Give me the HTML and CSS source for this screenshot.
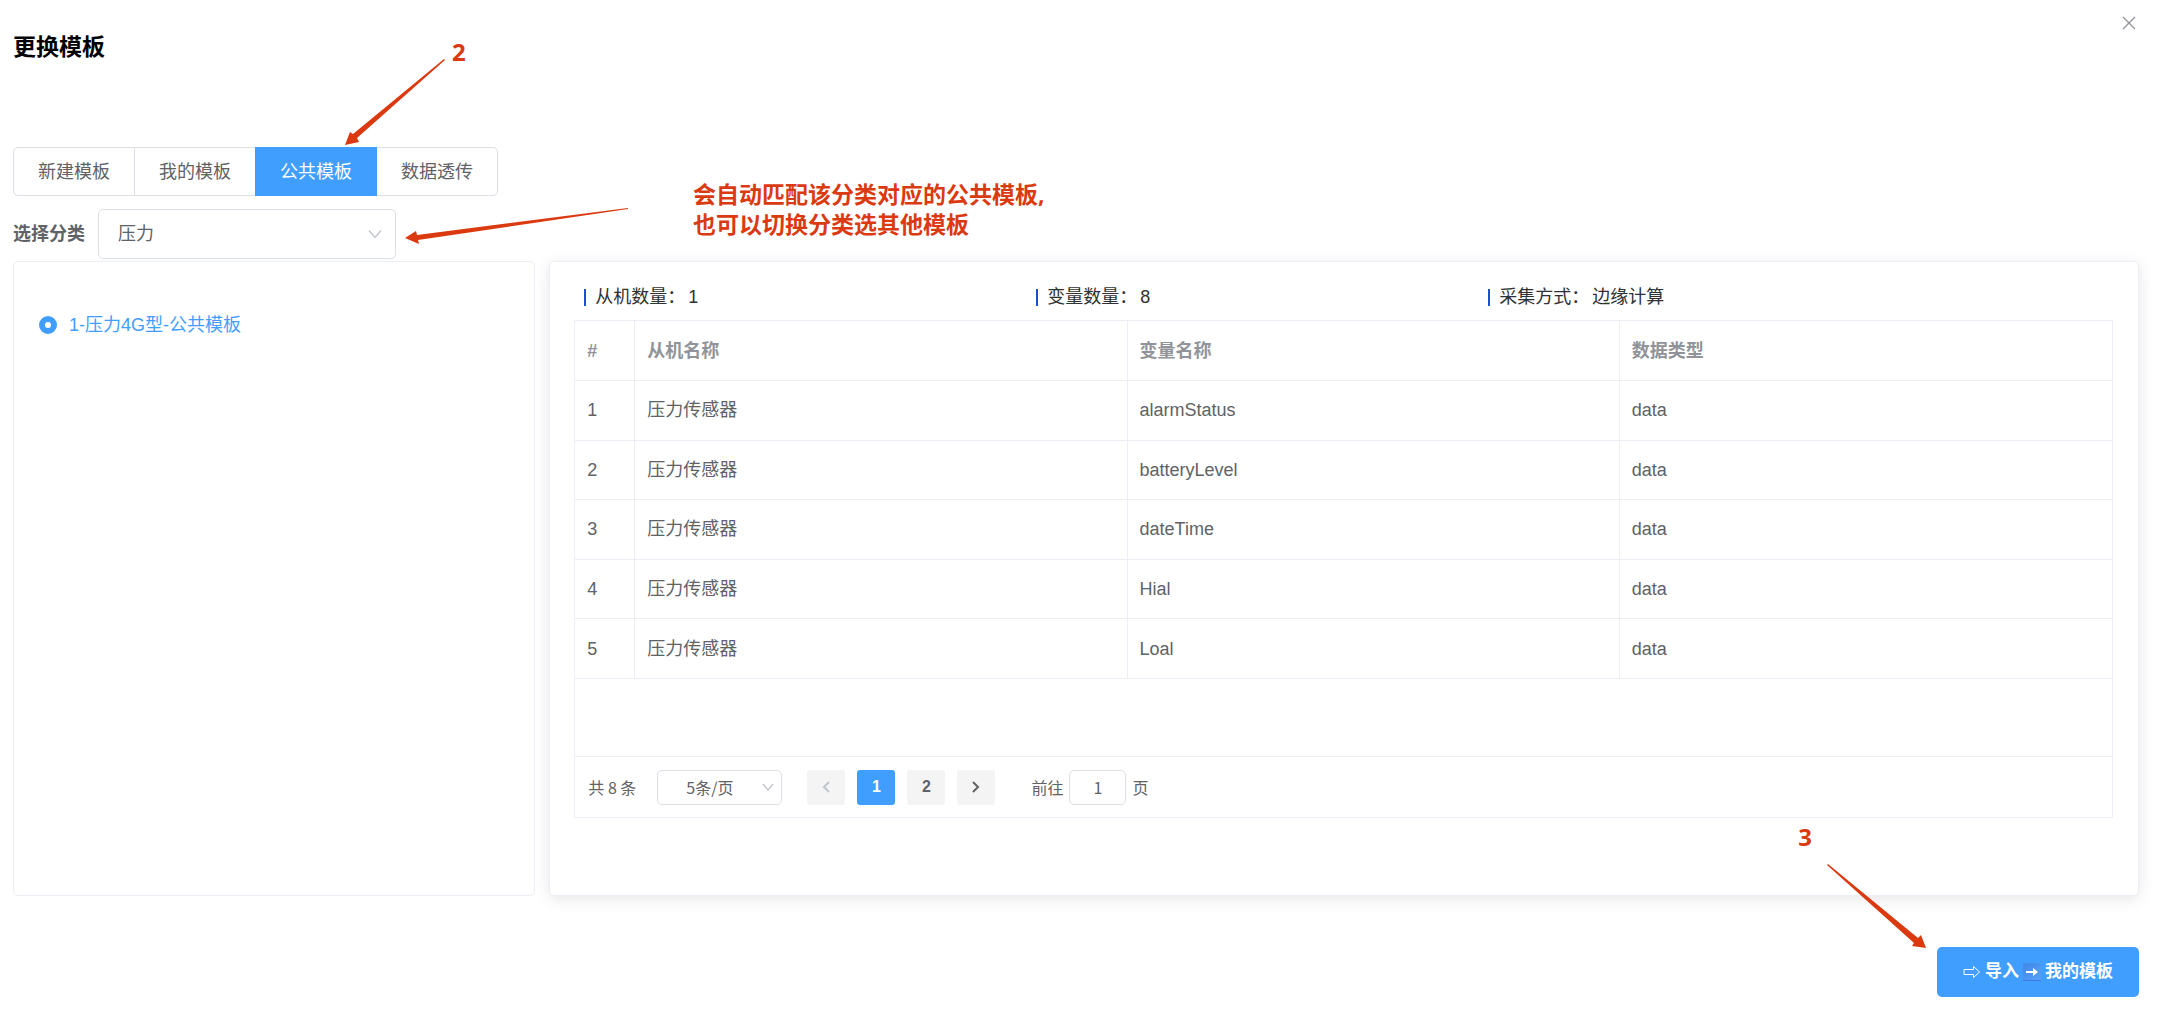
FILE: index.html
```html
<!DOCTYPE html>
<html lang="zh-CN">
<head>
  <meta charset="UTF-8">
  <meta name="viewport" content="width=device-width, initial-scale=1.0">
  <title>更换模板</title>
  <link rel="stylesheet" href="styles.css">
</head>
<body>
  <div class="dialog">
    <header class="dialog-header">
      <h1>更换模板</h1>
      <button type="button" class="close-btn" aria-label="关闭">
        <svg width="14" height="14" viewBox="0 0 14 14"><path d="M1 1l12 12M13 1L1 13" /></svg>
      </button>
    </header>

    <section class="toolbar">
      <div class="tabs">
        <button type="button" class="tab">新建模板</button>
        <button type="button" class="tab">我的模板</button>
        <button type="button" class="tab active">公共模板</button>
        <button type="button" class="tab">数据透传</button>
      </div>
      <div class="category">
        <label for="category">选择分类</label>
        <div class="select-box">
          <select id="category">
            <option>压力</option>
          </select>
          <svg class="chevron" width="14" height="9" viewBox="0 0 14 9"><path d="M1 1l6 7 6-7" /></svg>
        </div>
      </div>

      <!-- Guide notes for step 2 -->
      <span class="note step-two">2</span>
      <svg class="arrow arrow-tabs" width="100" height="87" viewBox="0 0 100 87">
        <path d="M99 0L100 1L12 79L14 83L0 86L5 73L8 75Z" />
      </svg>
      <svg class="arrow arrow-category" width="224" height="37" viewBox="0 0 224 37">
        <path d="M223 1L223 2L13 33L14 37L0 31L11 24L12 28Z" />
      </svg>
      <p class="note note-text">会自动匹配该分类对应的公共模板,<br>也可以切换分类选其他模板</p>
    </section>

    <main class="panels">
      <div class="template-list">
        <label class="template-item">
          <input type="radio" name="template" checked>
          <span>1-压力4G型-公共模板</span>
        </label>
      </div>

      <div class="template-detail">
        <ul class="stats">
          <li><span>从机数量：</span><span>1</span></li>
          <li><span>变量数量：</span><span>8</span></li>
          <li><span>采集方式：</span><span>边缘计算</span></li>
        </ul>

        <div class="table-box">
          <table>
            <thead>
              <tr><th class="index">#</th><th>从机名称</th><th>变量名称</th><th>数据类型</th></tr>
            </thead>
            <tbody>
              <tr><td>1</td><td>压力传感器</td><td>alarmStatus</td><td>data</td></tr>
              <tr><td>2</td><td>压力传感器</td><td>batteryLevel</td><td>data</td></tr>
              <tr><td>3</td><td>压力传感器</td><td>dateTime</td><td>data</td></tr>
              <tr><td>4</td><td>压力传感器</td><td>Hial</td><td>data</td></tr>
              <tr><td>5</td><td>压力传感器</td><td>Loal</td><td>data</td></tr>
            </tbody>
          </table>

          <div class="pagination">
            <span class="total">共 8 条</span>
            <div class="select-box page-size">
              <select aria-label="每页条数">
                <option>5条/页</option>
              </select>
              <svg class="chevron" width="12" height="8" viewBox="0 0 12 8"><path d="M1 1l5 6 5-6" /></svg>
            </div>
            <div class="pager">
              <button type="button" disabled aria-label="上一页">
                <svg width="8" height="12" viewBox="0 0 8 12"><path d="M7 1L2 6l5 5" /></svg>
              </button>
              <button type="button" class="active">1</button>
              <button type="button">2</button>
              <button type="button" aria-label="下一页">
                <svg width="8" height="12" viewBox="0 0 8 12"><path d="M1 1l5 5-5 5" /></svg>
              </button>
            </div>
            <label class="jump">前往 <input type="text" value="1"> 页</label>
          </div>
        </div>
      </div>
    </main>

    <footer class="dialog-footer">
      <button type="button" class="import-btn">
        <svg class="icon-outline" width="18" height="14" viewBox="0 0 18 14"><path d="M1 4.500h9.500V1.500l6 5.500-6 5.500v-3H1z" /></svg>
        <span>导入</span>
        <svg width="18" height="18" viewBox="0 0 18 18">
          <defs>
            <linearGradient id="tile" x1="0" y1="0" x2="1" y2="1">
              <stop offset="0" stop-color="#3f86e6" />
              <stop offset="1" stop-color="#5aa2fa" />
            </linearGradient>
          </defs>
          <rect width="18" height="18" rx="1" fill="url(#tile)" />
          <path d="M0 17h18v1H0z" fill="#3f7be0" />
          <path d="M3 8h7V5l5 4-5 4v-3H3z" fill="#fff" />
        </svg>
        <span>我的模板</span>
      </button>

      <!-- Guide notes for step 3 -->
      <span class="note step-three">3</span>
      <svg class="arrow arrow-import" width="99" height="85" viewBox="0 0 99 85">
        <path d="M0 1L1 0L91 74L94 71L99 84L85 82L87 79Z" />
      </svg>
    </footer>
  </div>
</body>
</html>
```

FILE: styles.css
```css
* {
  margin: 0;
  padding: 0;
  box-sizing: border-box;
}

body {
  background-color: #fff;
  color: #606266;
  font-family: "Liberation Sans", "Noto Sans CJK SC", sans-serif;
  font-size: 18px;
  line-height: 24px;
}

button,
input,
select {
  font: inherit;
  color: inherit;
}

button,
select {
  cursor: pointer;
}

svg {
  display: block;
  flex: none;
}

.dialog {
  min-height: 100vh;
  padding: 0 21px 22px 13px;
  display: flex;
  flex-direction: column;
}

.dialog-header {
  display: flex;
  justify-content: space-between;
  align-items: flex-start;
  height: 147px;
}

.dialog-header h1 {
  padding-top: 32px;
  font-size: 23px;
  line-height: 30px;
  color: #000;
}

.close-btn {
  margin-top: 13px;
  padding: 3px;
  border: none;
  background: none;
}

.close-btn path {
  fill: none;
  stroke: #909399;
  stroke-width: 1.3;
}

/* Toolbar */
.toolbar {
  position: relative;
}

.tabs {
  display: flex;
}

.tab {
  height: 49px;
  padding: 0 24px;
  margin-right: -1px;
  background-color: #fff;
  border: 1px solid #dcdfe6;
}

.tab:first-child {
  border-radius: 5px 0 0 5px;
}

.tab:last-of-type {
  border-radius: 0 5px 5px 0;
}

.tab.active {
  background-color: #409eff;
  border-color: #409eff;
  color: #fff;
  z-index: 1;
}

.category {
  display: flex;
  align-items: center;
  gap: 13px;
  margin-top: 13px;
  margin-bottom: 2px;
}

.category label {
  font-weight: bold;
}

.select-box {
  position: relative;
  width: 298px;
}

.select-box select {
  width: 100%;
  height: 50px;
  padding: 0 19px;
  appearance: none;
  background-color: #fff;
  border: 1px solid #dcdfe6;
  border-radius: 5px;
  outline: none;
}

.chevron {
  position: absolute;
  right: 14px;
  top: 50%;
  transform: translateY(-50%);
  pointer-events: none;
}

.chevron path {
  fill: none;
  stroke: #c0c4cc;
  stroke-width: 1.3;
}

/* Panels */
.panels {
  flex: 1;
  display: grid;
  grid-template-columns: 23fr 70fr;
  gap: 14px;
}

.template-list,
.template-detail {
  border: 1px solid #ebeef5;
  border-radius: 5px;
  background-color: #fff;
}

.template-list {
  padding: 51px 25px;
}

.template-item {
  display: flex;
  align-items: center;
  gap: 12px;
  color: #409eff;
  cursor: pointer;
}

.template-item input {
  appearance: none;
  width: 18px;
  height: 18px;
  border: 6px solid #409eff;
  border-radius: 50%;
}

.template-detail {
  padding: 23px 25px 23px 24px;
  box-shadow: 0 3px 15px rgba(0, 0, 0, 0.1);
}

.stats {
  display: flex;
  list-style: none;
  padding: 0 22px 0 10px;
  margin-bottom: 11px;
  color: #303133;
}

.stats li {
  flex: 0 0 30%;
  display: flex;
  align-items: center;
  gap: 3px;
}

.stats li::before {
  content: '';
  width: 2px;
  height: 17px;
  margin-right: 6px;
  background-color: #1352d1;
}

/* Table */
.table-box {
  border: 1px solid #ebeef5;
}

table {
  width: 100%;
  height: 358px;
  margin-bottom: 77px;
  table-layout: fixed;
  border-collapse: separate;
  border-spacing: 0;
}

th,
td {
  padding: 0 12px;
  text-align: left;
  border-right: 1px solid #ebeef5;
  border-bottom: 1px solid #ebeef5;
}

th:last-child,
td:last-child {
  border-right: none;
}

th {
  height: 60px;
  color: #909399;
}

.index {
  width: 60px;
}

/* Pagination */
.pagination {
  display: flex;
  align-items: center;
  height: 61px;
  padding: 0 13px;
  border-top: 1px solid #ebeef5;
  font-family: "Noto Sans CJK SC", sans-serif;
  font-size: 16px;
}

.page-size {
  width: 125px;
  margin-left: 21px;
}

.page-size select {
  height: 35px;
  padding: 0 20px 0 0;
  text-align: center;
  text-align-last: center;
}

.page-size .chevron {
  right: 8px;
}

.pager {
  display: flex;
  gap: 12px;
  margin: 0 36px 0 25px;
}

.pager button {
  display: flex;
  align-items: center;
  justify-content: center;
  width: 38px;
  height: 35px;
  background-color: #f4f4f5;
  border: none;
  border-radius: 3px;
  font-family: "Liberation Sans", sans-serif;
  font-weight: bold;
}

.pager button.active {
  background-color: #409eff;
  color: #fff;
}

.pager path {
  fill: none;
  stroke: #606266;
  stroke-width: 2;
}

.pager button:disabled path {
  stroke: #c0c4cc;
}

.jump {
  display: flex;
  align-items: center;
  gap: 6px;
}

.jump input {
  width: 57px;
  height: 35px;
  border: 1px solid #dcdfe6;
  border-radius: 5px;
  text-align: center;
  outline: none;
}

/* Footer */
.dialog-footer {
  position: relative;
  display: flex;
  justify-content: flex-end;
  margin-top: 51px;
}

.import-btn {
  display: flex;
  align-items: center;
  gap: 4px;
  height: 50px;
  padding: 0 26px;
  border: none;
  border-radius: 5px;
  background-color: #409eff;
  color: #fff;
  font-weight: bold;
  font-size: 17px;
}

.icon-outline path {
  fill: none;
  stroke: #fff;
}

/* Guide notes */
.note {
  position: absolute;
  color: #db3a11;
  font-family: "Noto Sans", "Noto Sans CJK SC", sans-serif;
  font-size: 24px;
  font-weight: bold;
  line-height: 30px;
}

.note-text {
  left: 680px;
  top: 32px;
  font-size: 23px;
  white-space: nowrap;
}

.step-two {
  left: 439px;
  top: -110px;
}

.step-three {
  right: 327px;
  top: -125px;
}

.arrow {
  position: absolute;
  fill: #db3a11;
}

.arrow-tabs {
  left: 332px;
  top: -88px;
}

.arrow-category {
  left: 392px;
  top: 60px;
}

.arrow-import {
  right: 213px;
  top: -83px;
}
```
